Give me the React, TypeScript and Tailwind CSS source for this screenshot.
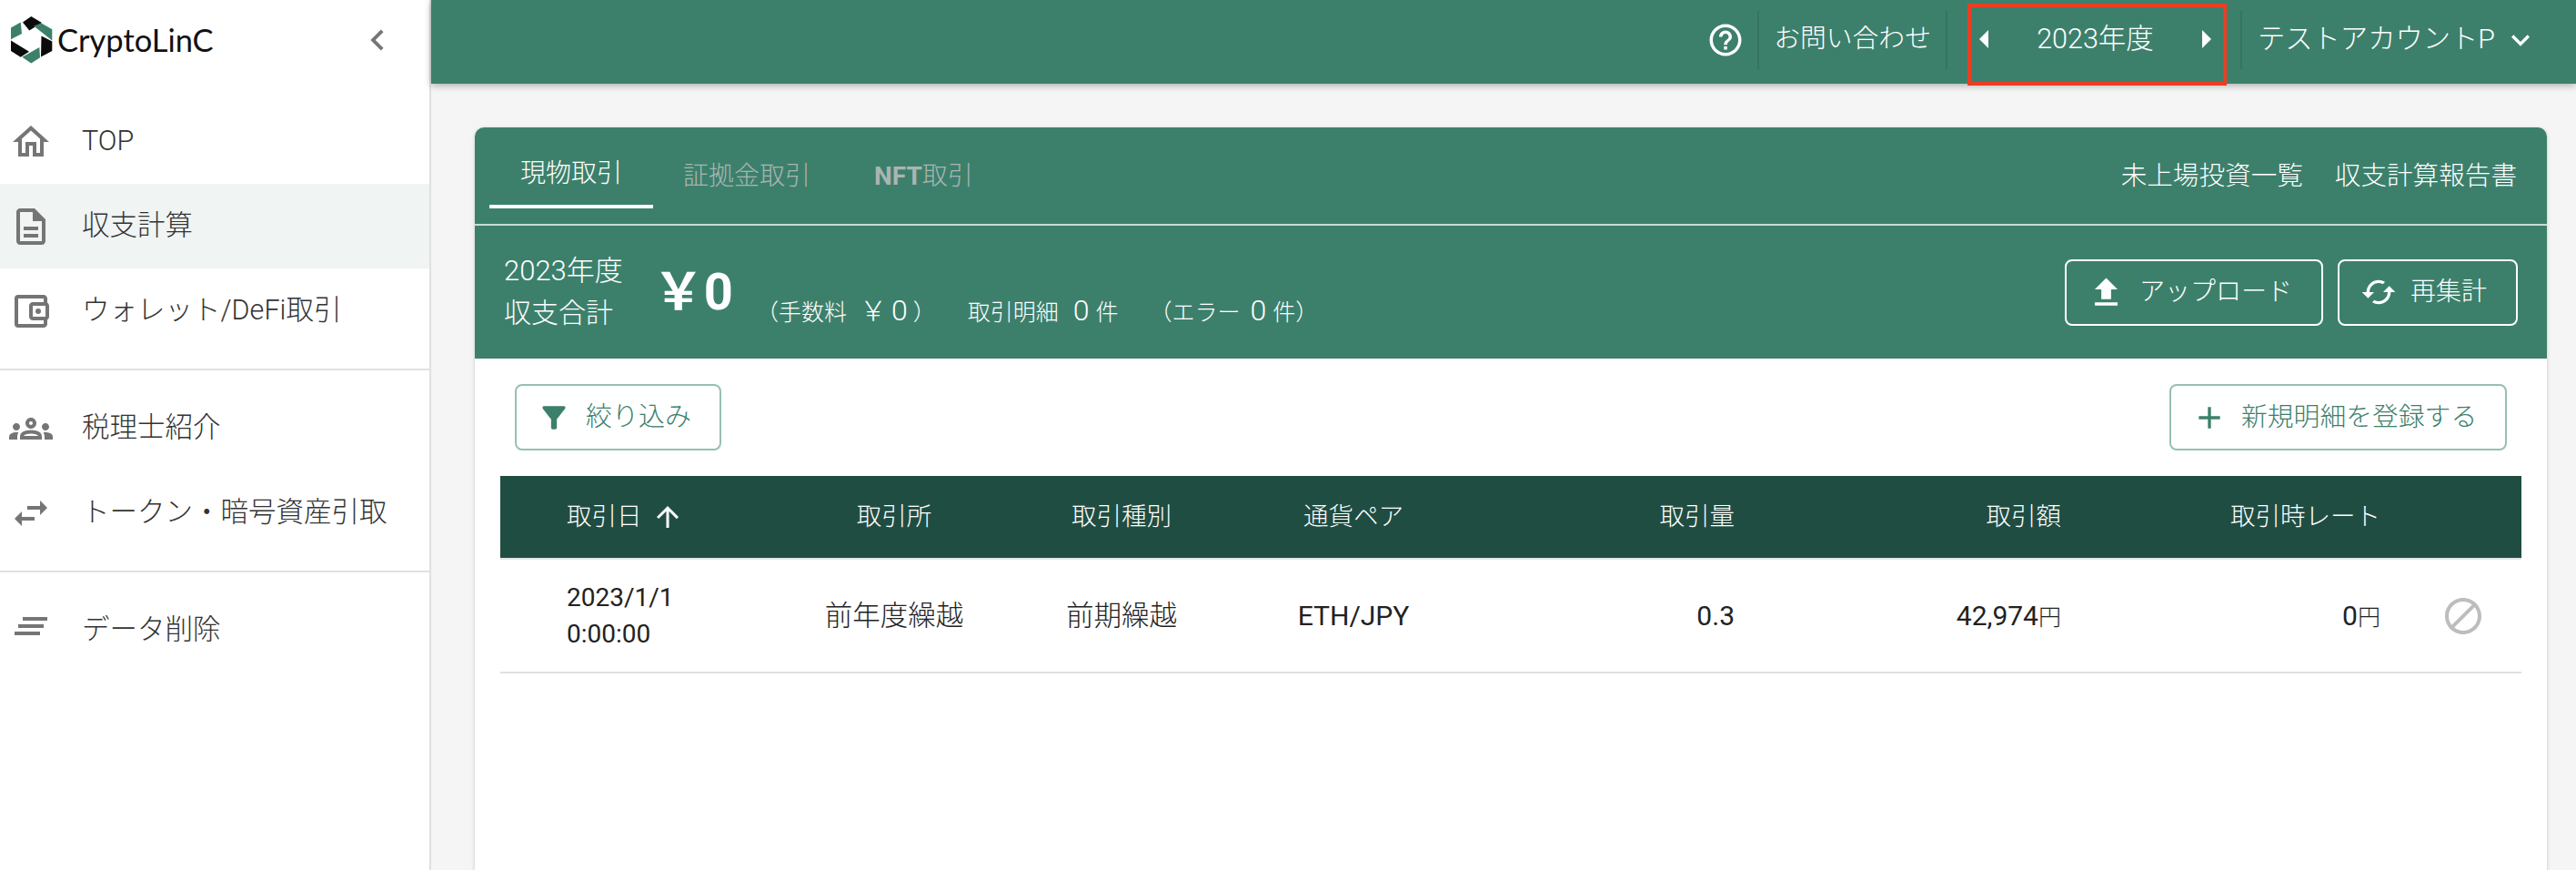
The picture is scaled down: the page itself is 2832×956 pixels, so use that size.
import React from "react";
import {
  MdOutlineHome,
  MdOutlineDescription,
  MdOutlineAccountBalanceWallet,
  MdOutlineGroups,
  MdSwapHoriz,
  MdChevronLeft,
  MdHelpOutline,
  MdArrowLeft,
  MdArrowRight,
  MdKeyboardArrowDown,
  MdFileUpload,
  MdCached,
  MdFilterAlt,
  MdAdd,
  MdArrowUpward,
  MdBlock,
} from "react-icons/md";

const font = "[font-family:Roboto,'Noto_Sans_CJK_JP',sans-serif]";

function Logo() {
  const blades = [
    { p: "25,24.5 34.3,18 46,25 32.3,33.5", c: "#0b0b0b" },
    { p: "37,28.5 45.5,25.5 57.3,32.3 57.3,44.5", c: "#3c806c" },
    { p: "45.5,39.5 57.3,45.5 57.3,56 45,62.5", c: "#0b0b0b" },
    { p: "24.3,62.7 43.3,52 44,63.3 34.3,69.5", c: "#3c806c" },
    { p: "12,44.5 32,56.7 22.7,62.7 12,56", c: "#0b0b0b" },
    { p: "12,30.5 22.7,24.5 24,37 12,43.3", c: "#3c806c" },
  ];
  return (
    <svg width="68" height="88" viewBox="0 0 68 88" className="shrink-0">
      {blades.map((b) => (
        <polygon key={b.p} points={b.p} fill={b.c} />
      ))}
    </svg>
  );
}

function DeleteLines() {
  return (
    <svg width="48" height="48" viewBox="0 0 48 48" fill="#757575">
      <rect x="15" y="9" width="27" height="4" />
      <rect x="10" y="17" width="28" height="4" />
      <rect x="6" y="25" width="28" height="4" />
    </svg>
  );
}

function NavItem({ icon, label, active }: { icon: React.ReactNode; label: string; active?: boolean }) {
  return (
    <div className={`flex h-[93px] items-center ${active ? "bg-[#f0f4f3]" : ""}`}>
      <div className="ml-[10px] flex w-[48px] justify-center text-[#757575]">{icon}</div>
      <span className="ml-[32px] pb-[1px] text-[30.5px] font-light text-[#333333]">{label}</span>
    </div>
  );
}

const gridCols = "grid grid-cols-[310px_246px_254px_256px_291px_359px_351px_155px] items-center";

function Sidebar() {
  return (
    <aside className="flex h-[956px] w-[474px] shrink-0 flex-col border-r-2 border-[#e0e0e0] bg-white">
      <div className="flex h-[109px] items-start justify-between pr-[34px]">
        <div className="flex h-[88px] items-center">
          <Logo />
          <span className="ml-[-5px] text-[34.5px] leading-none text-[#111111] [font-family:Lato,sans-serif]">CryptoLinC</span>
        </div>
        <MdChevronLeft size={46} className="mt-[21px] text-[#757575]" />
      </div>
      <NavItem icon={<MdOutlineHome size={48} />} label="TOP" />
      <NavItem icon={<MdOutlineDescription size={48} />} label="収支計算" active />
      <NavItem icon={<MdOutlineAccountBalanceWallet size={48} />} label="ウォレット/DeFi取引" />
      <div className="my-[17px] h-[2px] bg-[#e0e0e0]" />
      <NavItem icon={<MdOutlineGroups size={48} />} label="税理士紹介" />
      <NavItem icon={<MdSwapHoriz size={48} />} label="トークン・暗号資産引取" />
      <div className="my-[17px] h-[2px] bg-[#e0e0e0]" />
      <NavItem icon={<DeleteLines />} label="データ削除" />
    </aside>
  );
}

function Sep() {
  return <div className="h-[64px] w-[2px] shrink-0 bg-[#377261]" />;
}

function Header() {
  return (
    <header className="relative z-10 flex h-[92px] shrink-0 items-center justify-end bg-[#3c806c] pb-[4px] pr-[41px] text-[28.8px] font-light text-white shadow-[0_2px_8px_rgba(0,0,0,0.3)]">
      <MdHelpOutline size={42} />
      <div className="ml-[14px]"><Sep /></div>
      <span className="mx-[16px] mb-[3px]">お問い合わせ</span>
      <Sep />
      <div className="ml-[22px] mr-[15px] mt-[4px] flex h-[90px] w-[285px] items-center justify-between self-start border-4 border-[#ea3e23] pb-[12px]">
        <MdArrowLeft size={48} className="ml-[-9px]" />
        <span className="text-[30.5px]">2023年度</span>
        <MdArrowRight size={48} className="mr-[-5px]" />
      </div>
      <Sep />
      <span className="mb-[3px] ml-[17px] text-[30.3px]">テストアカウントP</span>
      <MdKeyboardArrowDown size={40} className="ml-[8px]" />
    </header>
  );
}

function Tabs() {
  return (
    <div className="flex h-[108px] items-start justify-between border-b-2 border-[#c7dcd5] px-[16px]">
      <div className="flex font-light">
        <div className="flex h-[89px] w-[180px] items-center justify-center border-b-4 border-white pt-[16px] text-[28px] text-white">
          現物取引
        </div>
        <div className="ml-[33px] flex h-[89px] items-center pt-[18px] text-[28px] text-[#aab5b1]">証拠金取引</div>
        <div className="ml-[70px] flex h-[89px] items-center pt-[18px] text-[28px] text-[#aab5b1]">
          <span className="font-bold">NFT</span>取引
        </div>
      </div>
      <div className="flex h-[104px] items-center gap-[35px] pr-[17px] pt-[2px] text-[28.6px] font-light text-white">
        <span>未上場投資一覧</span>
        <span>収支計算報告書</span>
      </div>
    </div>
  );
}

function Summary() {
  return (
    <div className="flex h-[146px] items-center justify-between px-[32px] text-white">
      <div className="flex items-center font-light">
        <div className="text-[30px] leading-[46px]">
          <div className="text-[31px]">2023年度</div>
          <div>収支合計</div>
        </div>
        <div className="ml-[33px] text-[56px] font-bold leading-[70px]">￥0</div>
        <div className="ml-[27px] mt-[42px] flex items-baseline text-[25px] leading-[40px]">
          <span className="ml-[-2px]">（手数料</span>
          <span className="ml-[14px] text-[30px]">￥</span>
          <span className="ml-[5px] text-[32px]">0</span>
          <span className="ml-[6px]">）</span>
          <span className="ml-[35px]">取引明細</span>
          <span className="ml-[16px] text-[32px]">0</span>
          <span className="ml-[7px]">件</span>
          <span className="ml-[34px]">（エラー</span>
          <span className="ml-[11px] text-[32px]">0</span>
          <span className="ml-[7px]">件）</span>
        </div>
      </div>
      <div className="flex gap-[16px] font-light">
        <button className="flex h-[73px] w-[284px] items-center rounded-[8px] border-2 border-white text-[28px] text-white">
          <MdFileUpload size={43} className="ml-[22px]" />
          <span className="ml-[15px]">アップロード</span>
        </button>
        <button className="flex h-[73px] w-[198px] items-center rounded-[8px] border-2 border-white text-[28px] text-white">
          <MdCached size={40} className="ml-[23px]" />
          <span className="ml-[15px]">再集計</span>
        </button>
      </div>
    </div>
  );
}

function Toolbar() {
  return (
    <div className="flex items-center justify-between px-[44px] pt-[28px] font-light">
      <button className="flex h-[73px] w-[227px] items-center rounded-[8px] border-2 border-[#96c0b4] text-[29px] text-[#3c806c]">
        <MdFilterAlt size={38} className="ml-[22px]" />
        <span className="ml-[16px]">絞り込み</span>
      </button>
      <button className="flex h-[73px] w-[371px] items-center rounded-[8px] border-2 border-[#96c0b4] text-[28.8px] text-[#3c806c]">
        <MdAdd size={40} className="ml-[22px]" />
        <span className="ml-[15px]">新規明細を登録する</span>
      </button>
    </div>
  );
}

function Table() {
  return (
    <div className="mx-[28px] mt-[28px] text-[#222222]">
      <div className={`${gridCols} h-[92px] border-b-2 border-[#e0e4e3] bg-[#204d42] text-[27.5px] font-light text-white`}>
        <div className="flex items-center pl-[73px]">
          取引日
          <MdArrowUpward size={36} className="ml-[10px]" />
        </div>
        <div className="text-center">取引所</div>
        <div className="text-center">取引種別</div>
        <div className="text-center">通貨ペア</div>
        <div className="text-right">取引量</div>
        <div className="text-right">取引額</div>
        <div className="text-right">取引時レート</div>
        <div />
      </div>
      <div className={`${gridCols} h-[125px] border-b-2 border-[#e0e0e0] text-[30px]`}>
        <div className="pl-[73px] text-[28px] leading-[40px]">
          <div>2023/1/1</div>
          <div>0:00:00</div>
        </div>
        <div className="text-center text-[30.5px] font-light">前年度繰越</div>
        <div className="text-center text-[30.5px] font-light">前期繰越</div>
        <div className="text-center">ETH/JPY</div>
        <div className="text-right">0.3</div>
        <div className="text-right">
          42,974<span className="text-[25px] font-light">円</span>
        </div>
        <div className="text-right">
          0<span className="text-[25px] font-light">円</span>
        </div>
        <div className="pl-[67px]">
          <MdBlock size={48} className="text-[#bdbdbd]" />
        </div>
      </div>
    </div>
  );
}

export default function App() {
  return (
    <div className={`flex h-[956px] w-[2832px] overflow-hidden bg-[#f5f5f5] ${font}`}>
      <Sidebar />
      <div className="flex min-w-0 flex-1 flex-col">
        <Header />
        <main className="flex-1 pl-[48px] pr-[32px] pt-[48px]">
          <div className="h-[900px] rounded-[10px] bg-white shadow-[0_1px_4px_rgba(0,0,0,0.18)]">
            <div className="rounded-t-[10px] bg-[#3c806c]">
              <Tabs />
              <Summary />
            </div>
            <Toolbar />
            <Table />
          </div>
        </main>
      </div>
    </div>
  );
}
